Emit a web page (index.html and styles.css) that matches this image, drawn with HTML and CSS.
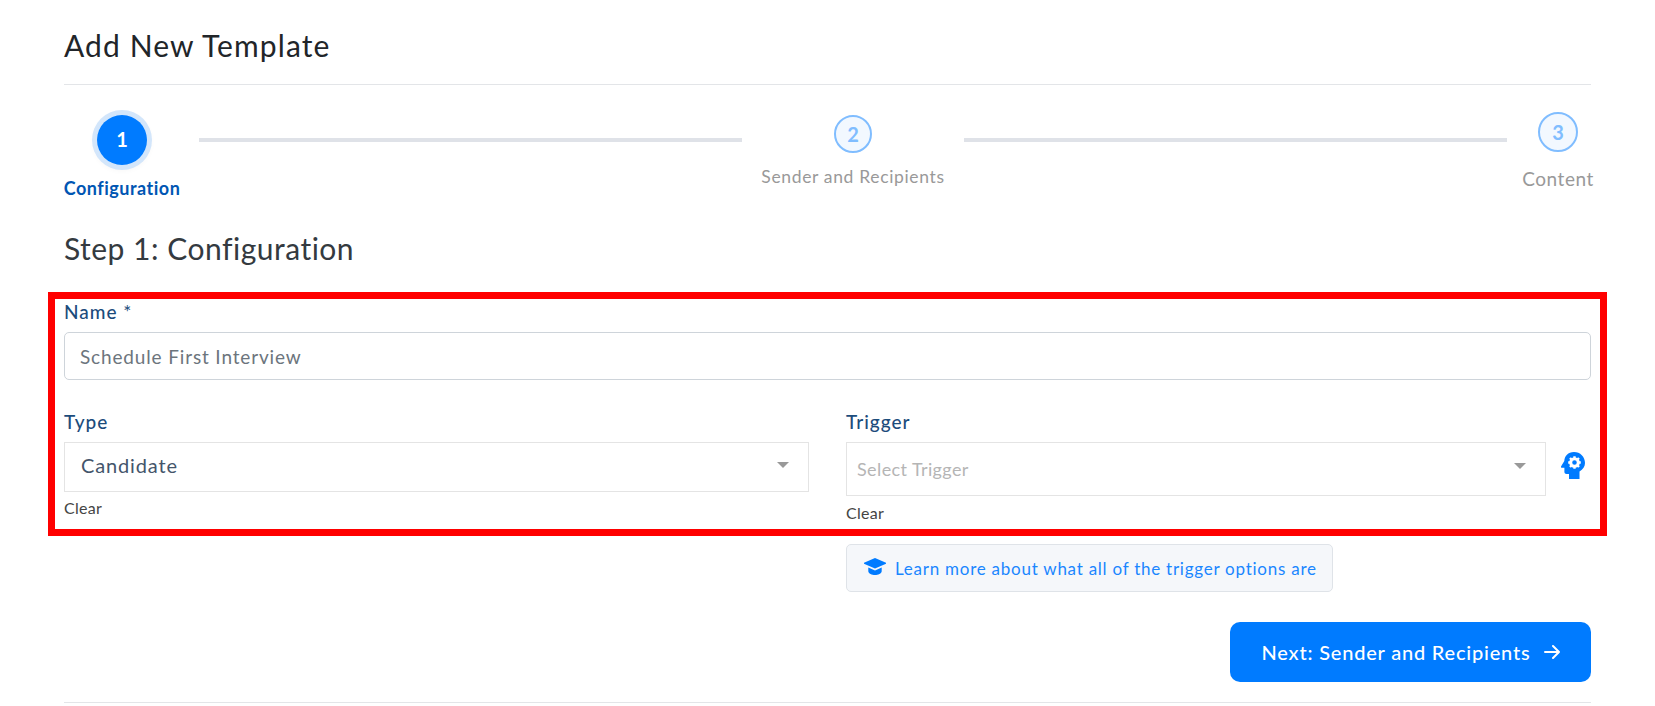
FILE: index.html
```html
<!DOCTYPE html>
<html lang="en">
<head>
  <meta charset="UTF-8" />
  <title>Add New Template</title>
  <link rel="stylesheet" href="styles.css">
</head>
<body>

  <h1 class="page-title">Add New Template</h1>

  <!-- Stepper -->
  <div class="stepper">
    <div class="step step-one">
      <div class="step-circle active">1</div>
      <div class="step-label active">Configuration</div>
    </div>
    <div class="step-line"></div>
    <div class="step step-two">
      <div class="step-circle">2</div>
      <div class="step-label">Sender and Recipients</div>
    </div>
    <div class="step-line"></div>
    <div class="step step-three">
      <div class="step-circle">3</div>
      <div class="step-label">Content</div>
    </div>
  </div>

  <h2 class="step-title">Step 1: Configuration</h2>

  <div class="highlight">
    <label class="field-label name-label" for="templateName">Name <span class="required">*</span></label>
    <input class="text-input" id="templateName" type="text" value="Schedule First Interview" />

    <div class="form-row">
      <div class="form-col">
        <div class="field-label">Type</div>
        <div class="select type-select">
          <span class="select-value">Candidate</span>
          <span class="select-arrow"></span>
        </div>
        <div class="clear type-clear">Clear</div>
      </div>
      <div class="form-col">
        <div class="field-label">Trigger</div>
        <div class="trigger-row">
          <div class="select trigger-select">
            <span class="select-placeholder">Select Trigger</span>
            <span class="select-arrow"></span>
          </div>
          <svg class="head-icon" viewBox="0 0 24 27" width="24" height="27">
            <path fill="#007bff" d="M13 0C7 0 3.500 4 3.300 9L0 14.600C-.2 15.300 .2 15.800 1 15.800H3.400V20C3.400 21.300 4.300 22 5.500 22H8V27H18.500V19.500C22 17.500 24 14.500 24 11C24 4.800 19.200 0 13 0Z"/>
            <circle cx="13.500" cy="10.500" r="3.800" fill="none" stroke="#fff" stroke-width="3"/>
            <path stroke="#fff" stroke-width="2.400" d="M13.500 4.200V6.500M13.500 14.500V16.800M7.200 10.500H9.500M17.500 10.500H19.800M9 6L10.600 7.600M16.400 13.400L18 15M9 15L10.600 13.400M16.400 7.600L18 6"/>
          </svg>
        </div>
        <div class="clear trigger-clear">Clear</div>
      </div>
    </div>
  </div>

  <div class="learn-row">
    <div class="learn-box">
      <svg class="cap-icon" viewBox="0 0 22 17" width="22" height="17">
        <path fill="#007bff" d="M11 0L0 4.800C-.2 5.100 -.2 5.500 0 5.800L11 10.600L22 5.800C22.200 5.500 22.200 5.100 22 4.800Z"/>
        <path fill="#007bff" d="M4.300 9.500V13.300C4.300 15.600 8 17 11 17C14 17 17.700 15.600 17.700 13.300V9.500L11 12.500Z"/>
      </svg>
      <span>Learn more about what all of the trigger options are</span>
    </div>
  </div>

  <div class="actions">
    <button class="next-btn">
      <span>Next: Sender and Recipients</span>
      <svg viewBox="0 0 16 16" width="16" height="16">
        <path fill="none" stroke="#fff" stroke-width="2" stroke-linecap="round" stroke-linejoin="round" d="M1 8H15M9 2L15 8L9 14"/>
      </svg>
    </button>
  </div>

  <div class="footer-line"></div>

</body>
</html>
```

FILE: styles.css
```css
* {
  box-sizing: border-box;
  margin: 0;
  padding: 0;
  font-family: 'Lato', sans-serif;
}

body {
  background: #fff;
  padding: 0 64px;
  color: #212529;
}

.page-title {
  font-size: 30px;
  font-weight: 400;
  line-height: 36px;
  letter-spacing: 1.1px;
  padding: 27px 0 21px;
  border-bottom: 1px solid #e3e5e8;
}

/* Stepper */
.stepper {
  display: flex;
  align-items: flex-start;
  height: 145px;
  margin-right: -2px;
}

.step {
  display: flex;
  flex-direction: column;
  align-items: center;
  flex-shrink: 0;
}

.step-one {
  width: 116px;
  margin-top: 30px;
}

.step-two {
  width: 184px;
  margin-top: 30px;
}

.step-three {
  width: 70px;
  margin-top: 27px;
}

.step-line {
  flex: 1;
  height: 4px;
  margin: 53px 19px 0;
  background: #dfe2e8;
}

.step-three .step-circle {
  width: 40px;
  height: 40px;
}

.step-line:nth-of-type(4) {
  margin-right: 16px;
}

.step-circle {
  width: 38px;
  height: 38px;
  display: flex;
  align-items: center;
  justify-content: center;
  border: 2px solid #80bdff;
  border-radius: 50%;
  background: #f2f8ff;
  color: #80bdff;
  font-size: 20px;
  font-weight: 700;
}

.step-circle.active {
  width: 50px;
  height: 50px;
  padding-bottom: 2px;
  border: none;
  background: #007bff;
  color: #fff;
  box-shadow: 0 0 0 5px #d3e6fb, 0 2px 8px rgba(0, 0, 0, 0.1);
}

.step-label {
  margin-top: 13px;
  line-height: 22px;
  font-size: 17.5px;
  letter-spacing: 0.65px;
  color: #999;
  white-space: nowrap;
}

.step-three .step-label {
  margin-top: 16px;
  font-size: 19px;
  letter-spacing: 0.55px;
}

.step-label.active {
  margin-top: 12px;
  font-size: 18px;
  font-weight: 700;
  letter-spacing: 0.5px;
  color: #0056b3;
}

.step-title {
  font-size: 30px;
  font-weight: 400;
  line-height: 36px;
  letter-spacing: 0.5px;
  color: #343a40;
}

/* Form */
.highlight {
  margin: 26px -16px 0;
  padding: 2px 9px 7px;
  border: 7px solid #f00;
}

.field-label {
  display: block;
  height: 22px;
  line-height: 22px;
  margin-bottom: 9px;
  font-size: 19px;
  font-weight: 500;
  letter-spacing: 1px;
  color: #1c4c7c;
}

.required {
  font-weight: 400;
}

.text-input {
  display: block;
  width: 100%;
  height: 48px;
  padding: 0 15px;
  border: 1px solid #ced4da;
  border-radius: 5px;
  font-size: 19px;
  letter-spacing: 0.85px;
  color: #6c757d;
}

.form-row,
.learn-row {
  display: grid;
  grid-template-columns: 745px 1fr;
  column-gap: 37px;
}

.form-row {
  margin-top: 31px;
}

.select {
  display: flex;
  align-items: center;
  justify-content: space-between;
  border: 1px solid #e4e4e4;
  background: #fff;
}

.type-select {
  height: 50px;
  padding: 0 19px 4px 16px;
}

.trigger-row {
  display: flex;
  align-items: flex-start;
}

.trigger-select {
  width: 700px;
  height: 54px;
  padding: 0 19px 0 10px;
}

.trigger-select .select-arrow {
  margin-top: -6px;
}

.select-value {
  font-size: 20px;
  letter-spacing: 0.85px;
  color: #44556b;
}

.select-placeholder {
  font-size: 18px;
  letter-spacing: 0.4px;
  color: #b5b5b5;
}

.select-arrow {
  width: 0;
  height: 0;
  border-left: 6px solid transparent;
  border-right: 6px solid transparent;
  border-top: 6px solid #999;
}

.head-icon {
  margin: 10px 0 0 15px;
}

.clear {
  height: 18px;
  line-height: 18px;
  font-size: 16px;
  letter-spacing: 0.3px;
  color: #444;
}

.type-clear {
  margin-top: 7px;
}

.trigger-clear {
  margin-top: 8px;
}

/* Learn more box */
.learn-row {
  margin-top: 8px;
}

.learn-box {
  grid-column: 2;
  display: flex;
  align-items: center;
  gap: 9px;
  width: 487px;
  height: 48px;
  padding-left: 17px;
  background: #f5f7fa;
  border: 1px solid #dfe3e8;
  border-radius: 5px;
  font-size: 17px;
  letter-spacing: 0.75px;
  color: #1a86ff;
  white-space: nowrap;
}

.cap-icon {
  flex-shrink: 0;
  margin-top: -4px;
}

.actions {
  display: flex;
  justify-content: flex-end;
  margin-top: 30px;
}

.next-btn {
  display: flex;
  align-items: center;
  justify-content: center;
  gap: 13px;
  width: 361px;
  height: 60px;
  background: #007bff;
  border: none;
  border-radius: 10px;
  color: #fff;
  font-size: 20px;
  font-weight: 500;
  letter-spacing: 0.8px;
}

.footer-line {
  height: 1px;
  margin-top: 20px;
  background: #e3e5e8;
}
```
